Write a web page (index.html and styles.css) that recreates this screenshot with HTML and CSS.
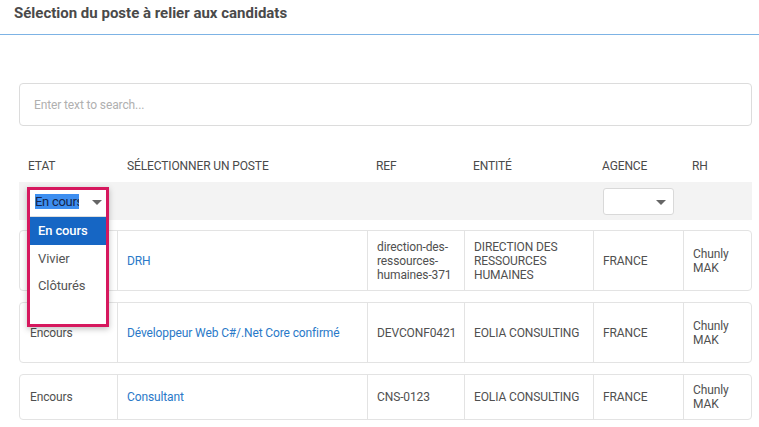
FILE: index.html
```html
<!DOCTYPE html>
<html lang="fr">
<head>
<meta charset="utf-8">
<title>Sélection du poste</title>
<link rel="stylesheet" href="styles.css">
</head>
<body>
<header class="topbar">
  <h1 class="title">Sélection du poste à relier aux candidats</h1>
</header>
<main class="content">
  <div class="search">Enter text to search...</div>

  <div class="grid head">
    <div class="hcell">ETAT</div>
    <div class="hcell">SÉLECTIONNER UN POSTE</div>
    <div class="hcell">REF</div>
    <div class="hcell">ENTITÉ</div>
    <div class="hcell">AGENCE</div>
    <div class="hcell">RH</div>
  </div>

  <div class="grid filters">
    <div class="fcell first">
      <div class="dropdown">
        <div class="dd-select">
          <span class="dd-value">En cours</span>
          <span class="caret"></span>
        </div>
        <ul class="dd-options">
          <li class="dd-opt active">En cours</li>
          <li class="dd-opt">Vivier</li>
          <li class="dd-opt">Clôturés</li>
        </ul>
      </div>
    </div>
    <div class="fcell"></div>
    <div class="fcell"></div>
    <div class="fcell"></div>
    <div class="fcell">
      <div class="mini-select"><span class="caret"></span></div>
    </div>
    <div class="fcell"></div>
  </div>

  <div class="grid row tall">
    <div class="cell">Encours</div>
    <div class="cell"><a class="link">DRH</a></div>
    <div class="cell">direction-des-<br>ressources-<br>humaines-371</div>
    <div class="cell">DIRECTION DES<br>RESSOURCES<br>HUMAINES</div>
    <div class="cell">FRANCE</div>
    <div class="cell">Chunly<br>MAK</div>
  </div>

  <div class="grid row tall">
    <div class="cell">Encours</div>
    <div class="cell"><a class="link">Développeur Web C#/.Net Core confirmé</a></div>
    <div class="cell">DEVCONF0421</div>
    <div class="cell">EOLIA CONSULTING</div>
    <div class="cell">FRANCE</div>
    <div class="cell">Chunly<br>MAK</div>
  </div>

  <div class="grid row">
    <div class="cell">Encours</div>
    <div class="cell"><a class="link">Consultant</a></div>
    <div class="cell">CNS-0123</div>
    <div class="cell">EOLIA CONSULTING</div>
    <div class="cell">FRANCE</div>
    <div class="cell">Chunly<br>MAK</div>
  </div>
</main>
</body>
</html>
```

FILE: styles.css
```css
* { box-sizing: border-box; }
html, body { margin: 0; padding: 0; background: #fff; }
body {
  font-family: Roboto, "Liberation Sans", Arial, sans-serif;
  color: #505050;
  font-size: 12px;
  letter-spacing: -0.12px;
  width: 759px;
  height: 427px;
  overflow: hidden;
}
.topbar {
  height: 35px;
  border-bottom: 1px solid #7db3e5;
  padding: 0 14px;
  display: flex;
  align-items: center;
}
.title {
  margin: 0 0 8px 0;
  font-size: 15px;
  font-weight: 700;
  letter-spacing: 0;
  color: #4a4a4a;
}
.content {
  padding: 48px 8px 0 19px;
}
.search {
  height: 43px;
  border: 1px solid #dcdcdc;
  border-radius: 4px;
  display: flex;
  align-items: center;
  padding-left: 14px;
  color: #b0b0b0;
  font-size: 12px;
  width: 733px;
}
.grid {
  display: grid;
  grid-template-columns: 98px 250px 97px 129px 90px 67px;
  width: 733px;
}
.head {
  margin-top: 24px;
  height: 32px;
  padding-left: 1px;
  align-items: center;
}
.hcell {
  padding-left: 8px;
  font-size: 12px;
  color: #4a4a4a;
}
.hcell:nth-child(2) { padding-left: 9px; }
.filters {
  height: 38px;
  background: #f3f3f3;
  padding-left: 1px;
}
.fcell { position: relative; padding: 6px 0 0 9px; }
.mini-select {
  width: 71px;
  height: 27px;
  background: #fff;
  border: 1px solid #d9d9d9;
  border-radius: 3px;
  position: relative;
}
.caret {
  position: absolute;
  width: 0; height: 0;
  border-left: 5px solid transparent;
  border-right: 5px solid transparent;
  border-top: 5px solid #666;
}
.mini-select .caret { right: 7px; top: 11px; }

.dropdown {
  position: absolute;
  left: 7px;
  top: 5px;
  width: 82px;
  height: 140px;
  border: 3px solid #d6185e;
  background: #fff;
  box-shadow: 0 2px 6px rgba(0,0,0,0.25);
  z-index: 5;
}
.dd-select {
  height: 27px;
  border-bottom: 1px solid #dedede;
  position: relative;
  padding: 4px 0 0 5px;
}
.dd-value {
  display: inline-block;
  width: 44px;
  overflow: hidden;
  white-space: nowrap;
  background: #3d8ef0;
  color: #15254a;
  font-size: 13px;
  line-height: 15px;
  letter-spacing: -0.3px;
}
.dd-select .caret { right: 4px; top: 10px; }
.dd-options { list-style: none; margin: 0; padding: 0; }
.dd-opt {
  height: 27.5px;
  line-height: 27.5px;
  padding-left: 8px;
  font-size: 13px;
  color: #555;
}
.dd-opt.active { background: #1666c4; color: #fff; font-weight: 500; }

.row {
  margin-top: 10px;
  border: 1px solid #e3e3e3;
  border-radius: 4px;
  min-height: 46px;
}
.row.tall { min-height: 61px; }
.row + .row { margin-top: 11px; }
.cell {
  border-right: 1px solid #e3e3e3;
  padding: 0 9px;
  display: flex;
  align-items: center;
  line-height: 14px;
  color: #505050;
}
.cell:first-child { padding-left: 10px; }
.cell:last-child { border-right: none; }
.link { color: #2a79c8; text-decoration: none; }
```
